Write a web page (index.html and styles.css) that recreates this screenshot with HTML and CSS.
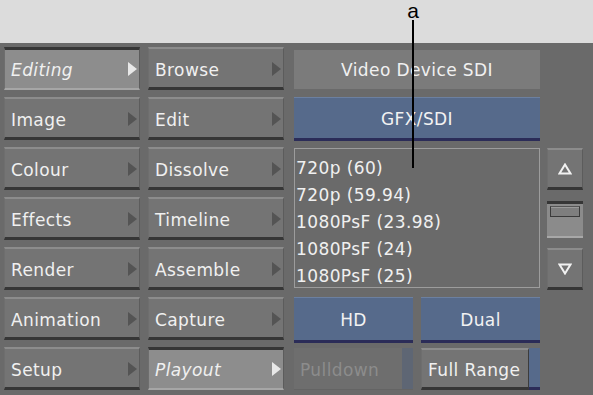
FILE: index.html
```html
<!DOCTYPE html>
<html>
<head>
<meta charset="utf-8">
<link rel="stylesheet" href="styles.css">
</head>
<body>
<div class="top"></div>
<div class="panel">
  <div class="grid">
    <div class="btn sel c1 r1"><span class="lbl it">Editing</span><span class="arr"></span></div>
    <div class="btn c1 r2"><span class="lbl">Image</span><span class="arr"></span></div>
    <div class="btn c1 r3"><span class="lbl">Colour</span><span class="arr"></span></div>
    <div class="btn c1 r4"><span class="lbl">Effects</span><span class="arr"></span></div>
    <div class="btn c1 r5"><span class="lbl">Render</span><span class="arr"></span></div>
    <div class="btn c1 r6"><span class="lbl">Animation</span><span class="arr"></span></div>
    <div class="btn c1 r7"><span class="lbl">Setup</span><span class="arr"></span></div>

    <div class="btn c2 r1"><span class="lbl">Browse</span><span class="arr"></span></div>
    <div class="btn c2 r2"><span class="lbl">Edit</span><span class="arr"></span></div>
    <div class="btn c2 r3"><span class="lbl">Dissolve</span><span class="arr"></span></div>
    <div class="btn c2 r4"><span class="lbl">Timeline</span><span class="arr"></span></div>
    <div class="btn c2 r5"><span class="lbl">Assemble</span><span class="arr"></span></div>
    <div class="btn c2 r6"><span class="lbl">Capture</span><span class="arr"></span></div>
    <div class="btn sel c2 r7"><span class="lbl it">Playout</span><span class="arr"></span></div>

    <div class="label c3 r1">Video Device SDI</div>
    <div class="blue c3 r2">GFX/SDI</div>
    <div class="list c3 r3">
      <div>720p (60)</div>
      <div>720p (59.94)</div>
      <div>1080PsF (23.98)</div>
      <div>1080PsF (24)</div>
      <div>1080PsF (25)</div>
    </div>
    <div class="btn sbtn c4 r3">
      <svg width="14" height="12" viewBox="0 0 14 12"><path d="M7 1.5 L12.5 10.5 L1.5 10.5 Z" fill="none" stroke="#f2f2f2" stroke-width="2" stroke-linejoin="miter"/></svg>
    </div>
    <div class="track c4 r4"><div class="thumb"></div></div>
    <div class="btn sbtn c4 r5">
      <svg width="14" height="12" viewBox="0 0 14 12"><path d="M7 10.5 L12.5 1.5 L1.5 1.5 Z" fill="none" stroke="#f2f2f2" stroke-width="2" stroke-linejoin="miter"/></svg>
    </div>

    <div class="pair c3 r6">
      <div class="blue">HD</div>
      <div class="blue">Dual</div>
    </div>
    <div class="pair c3 r7">
      <div class="split">
        <div class="dis">Pulldown</div>
        <div class="strip dim"></div>
      </div>
      <div class="split">
        <div class="btn fr"><span class="lbl">Full Range</span></div>
        <div class="strip"></div>
      </div>
    </div>
  </div>
  <div class="callout">
    <span class="callout-letter">a</span>
    <span class="callout-line"></span>
  </div>
</div>
</body>
</html>
```

FILE: styles.css
```css
html, body {
  margin: 0;
  padding: 0;
  background: #6a6a6a;
}
body {
  width: 593px;
  height: 395px;
  overflow: hidden;
  font-family: "DejaVu Sans", sans-serif;
  font-size: 17px;
  letter-spacing: 0.4px;
  color: #f0f0f0;
}
.top {
  height: 43px;
  background: #dcdcdc;
}
.panel {
  position: relative;
  height: 352px;
  background: #6a6a6a;
  padding: 4px 0 0 4px;
  box-sizing: border-box;
}
.grid {
  display: grid;
  grid-template-columns: 136px 8px 136px 10px 246px 7px 36px;
  grid-template-rows: repeat(7, 43px);
  row-gap: 7px;
}
.c1 { grid-column: 1; }
.c2 { grid-column: 3; }
.c3 { grid-column: 5; }
.c4 { grid-column: 7; }
.r1 { grid-row: 1; }
.r2 { grid-row: 2; }
.r3 { grid-row: 3; }
.r4 { grid-row: 4; }
.r5 { grid-row: 5; }
.r6 { grid-row: 6; }
.r7 { grid-row: 7; }

.btn {
  box-sizing: border-box;
  display: flex;
  align-items: center;
  justify-content: space-between;
  background: #747474;
  border-top: 2px solid #8c8c8c;
  border-bottom: 3px solid #363636;
  border-left: 1px solid #6e6e6e;
  border-right: 1px solid #5c5c5c;
  padding: 3px 2px 0 6px;
  color: #f0f0f0;
}
.btn.sel {
  background: #8d8d8d;
  border-top: 3px solid #363636;
  border-bottom: 2px solid #a6a6a6;
  padding-top: 2px;
}
.lbl { white-space: nowrap; }
.it { font-style: italic; }
.arr {
  width: 0;
  height: 0;
  margin-top: -2px;
  border-left: 9px solid #545454;
  border-top: 7px solid transparent;
  border-bottom: 7px solid transparent;
}
.sel .arr { border-left-color: #e8e8e8; }

.label {
  margin-top: 3px;
  margin-bottom: 1px;
  background: #7b7b7b;
  display: flex;
  align-items: center;
  justify-content: center;
  padding-top: 1px;
}
.blue {
  box-sizing: border-box;
  background: #566a8b;
  border-top: 1px solid #6c80a0;
  border-bottom: 3px solid #2b2c58;
  display: flex;
  align-items: center;
  justify-content: center;
  color: #f2f2f2;
  padding-top: 1px;
}
.r2.blue { height: 44px; }
.list {
  grid-row: 3 / span 3;
  margin-top: 1px;
  margin-bottom: 2px;
  border: 1px solid #9c9c9c;
  padding: 6px 0 0 1px;
  line-height: 27px;
  color: #f0f0f0;
  overflow: hidden;
}
.sbtn {
  justify-content: center;
  padding: 0;
  margin-top: 1px;
}
.track {
  margin-top: 4px;
  margin-bottom: 2px;
  box-sizing: border-box;
  border-top: 3px solid #363636;
  border-bottom: 2px solid #a8a8a8;
  background: #8b8b8b;
  padding: 2px 3px 0 3px;
}
.thumb {
  height: 9px;
  border: 1px solid #3a3a3a;
  border-top-color: #555;
  background: #7e7e7e;
  box-shadow: inset 0 1px 0 #9a9a9a;
}
.pair {
  display: grid;
  grid-template-columns: 119px 119px;
  column-gap: 8px;
}
.pair .blue { height: 46px; }
.split {
  display: flex;
  margin-top: 1px;
}
.dis {
  flex: 1;
  background: #6e6e6e;
  color: #8c8c8c;
  display: flex;
  align-items: center;
  padding: 3px 0 0 6px;
  border-bottom: 1px solid #646464;
}
.strip {
  width: 11px;
  background: #566a8b;
  border-bottom: 3px solid #2b2c58;
}
.strip.dim {
  background: #5e6674;
  border-bottom: 1px solid #646464;
}
.fr {
  flex: 1;
  padding-left: 6px;
  border-right: 1px solid #3c3c3c;
}
.callout {
  position: absolute;
  left: 403px;
  top: -43px;
  width: 20px;
  display: flex;
  flex-direction: column;
  align-items: center;
}
.callout-letter {
  font-family: "Liberation Sans", Arial, sans-serif;
  font-size: 21px;
  letter-spacing: 0;
  color: #000;
  line-height: 21px;
}
.callout-line {
  margin-top: -1px;
  width: 2px;
  height: 148px;
  background: #000;
}
```
